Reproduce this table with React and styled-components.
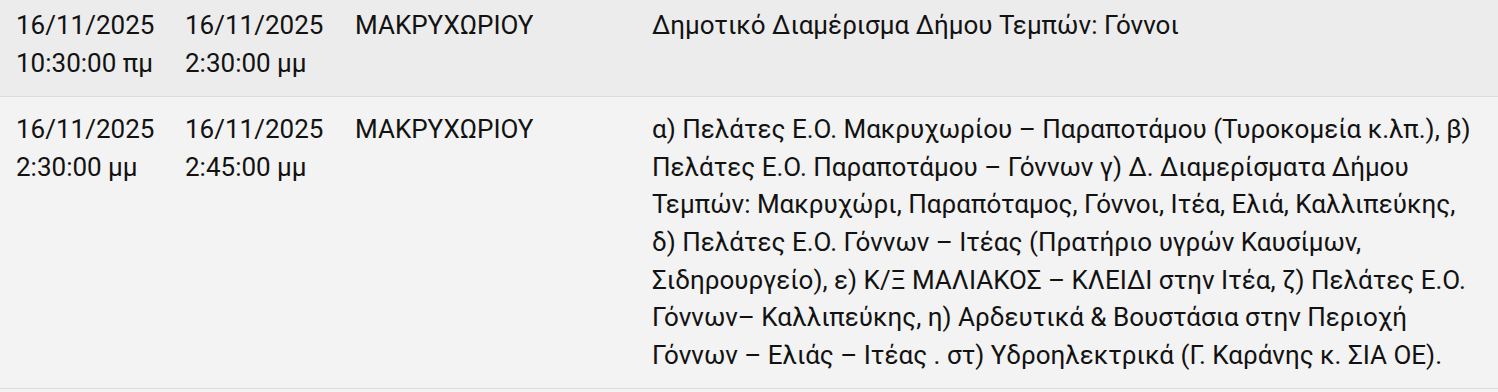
import React from "react";
import styled, { createGlobalStyle } from "styled-components";

const GlobalStyle = createGlobalStyle`
  html, body {
    margin: 0;
    padding: 0;
    background: #f3f3f3;
    overflow: hidden;
  }
  body {
    font-family: Roboto, "Noto Sans", sans-serif;
    color: #121212;
  }
`;

const Table = styled.div`
  width: 1498px;
  margin-top: -7px;
`;

const Row = styled.div`
  display: grid;
  grid-template-columns: 169px 170px 297px 1fr;
  background: ${(p) => (p.$shade ? "#ececec" : "#f3f3f3")};
  border-bottom: 1px solid #dcdcdc;
`;

const Cell = styled.div`
  padding: 14px 16px;
  font-size: 26px;
  line-height: 37.6px;
  white-space: ${(p) => (p.$nowrap ? "nowrap" : "normal")};
`;

const rows = [
  {
    from: ["16/11/2025", "10:30:00 πμ"],
    to: ["16/11/2025", "2:30:00 μμ"],
    area: "ΜΑΚΡΥΧΩΡΙΟΥ",
    desc: "Δημοτικό Διαμέρισμα Δήμου Τεμπών: Γόννοι",
  },
  {
    from: ["16/11/2025", "2:30:00 μμ"],
    to: ["16/11/2025", "2:45:00 μμ"],
    area: "ΜΑΚΡΥΧΩΡΙΟΥ",
    desc:
      "α) Πελάτες Ε.Ο. Μακρυχωρίου – Παραποτάμου (Τυροκομεία κ.λπ.), β) Πελάτες Ε.Ο. Παραποτάμου – Γόννων γ) Δ. Διαμερίσματα Δήμου Τεμπών: Μακρυχώρι, Παραπόταμος, Γόννοι, Ιτέα, Ελιά, Καλλιπεύκης, δ) Πελάτες Ε.Ο. Γόννων – Ιτέας (Πρατήριο υγρών Καυσίμων, Σιδηρουργείο), ε) Κ/Ξ ΜΑΛΙΑΚΟΣ – ΚΛΕΙΔΙ στην Ιτέα, ζ) Πελάτες Ε.Ο. Γόννων– Καλλιπεύκης, η) Αρδευτικά & Βουστάσια στην Περιοχή Γόννων – Ελιάς – Ιτέας . στ) Υδροηλεκτρικά (Γ. Καράνης κ. ΣΙΑ ΟΕ).",
  },
];

export default function App() {
  return (
    <>
      <GlobalStyle />
      <Table>
        {rows.map((r, i) => (
          <Row key={i} $shade={i % 2 === 0}>
            <Cell $nowrap>
              {r.from[0]}
              <br />
              {r.from[1]}
            </Cell>
            <Cell $nowrap>
              {r.to[0]}
              <br />
              {r.to[1]}
            </Cell>
            <Cell>{r.area}</Cell>
            <Cell>{r.desc}</Cell>
          </Row>
        ))}
      </Table>
    </>
  );
}
